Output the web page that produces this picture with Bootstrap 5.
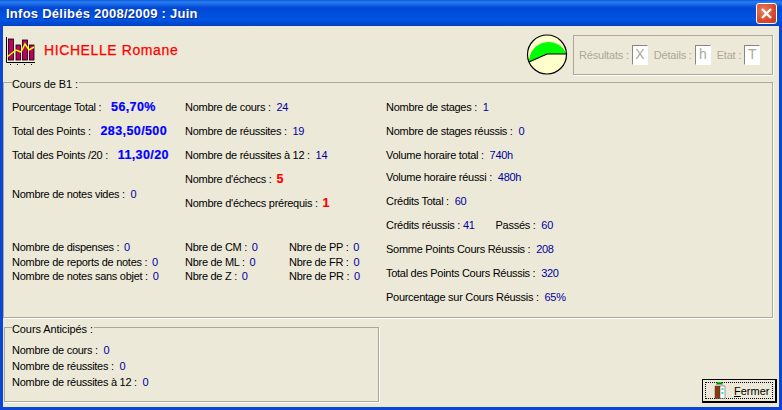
<!DOCTYPE html>
<html lang="fr"><head><meta charset="utf-8"><title>Infos Délibés</title>
<link href="https://cdn.jsdelivr.net/npm/bootstrap@5.3.0/dist/css/bootstrap.min.css" rel="stylesheet">
<style>
html,body{margin:0;height:410px;width:782px;overflow:hidden}
body{font:11px/14px "Liberation Sans",sans-serif;letter-spacing:-.28px;color:#000;background:#0a4ad8}
.xp-win{width:782px;height:410px;padding:0 3px 3px 3px;background:#0b47d6}
.xp-title{height:26px;margin:0 -3px;padding:0 5px 0 6px;background:linear-gradient(#0a5be0,#2a7cf0 8%,#0148d4 30%,#0054e3 75%,#0242c4);color:#fff;font:bold 13px "Liberation Sans",sans-serif;letter-spacing:.25px;text-shadow:1px 1px 0 #0a2a90}
.xp-close{width:21px;height:21px;border:1px solid #fff;border-radius:3px;background:radial-gradient(circle at 35% 35%,#e8805f,#d8492a 60%,#c03a1a);padding:0;line-height:0}
.xp-client{height:381px;background:#ece9d8}
.xp-head{height:47px;padding:8px 6px 0 2px}
.xp-name{color:#f00;font:14px/14px "Liberation Sans",sans-serif;-webkit-text-stroke:.25px #f00;margin:9px 0 0 7px;letter-spacing:.6px}
.xp-pie{margin-right:5px}
.xp-state{width:200px;height:40px;margin-top:1px;flex:none;border:1px solid #aca899;box-shadow:1px 1px 0 #fff;padding-left:5px;color:#aca899;gap:3px;white-space:nowrap;letter-spacing:-.2px}
.xp-box{width:16px;height:20px;background:#fff;border:1px solid;border-color:#8a877a #fff #fff #8a877a;line-height:17px;font-size:14px;text-align:center;margin-right:3px}
fieldset.xp-grp{border:1px solid #aca899;box-shadow:1px 1px 0 #fff;margin:0;min-width:0}
legend.xp-leg{float:none;width:auto;font:11px/14px "Liberation Sans",sans-serif;letter-spacing:-.1px;margin:0;padding:4px 1px 0 0;color:#000}
.xp-main{height:245px;padding:0 0 0 8px;margin-right:6px!important}
.xp-inner{padding-top:4px}
.xp-col1{width:173px}.xp-col2{width:201px}.xp-col4{width:104px}
.ln{height:24px;line-height:24px;white-space:nowrap}
.ln-n{height:22px}
.ln-t{height:14.5px;line-height:14.5px;white-space:nowrap}
.gap-a{margin-top:15px}.gap-b{margin-top:25px}
.v{color:#00009c;margin-left:3px}
.ln-t .v{margin-left:2px}
.v0{margin-left:0}
.vb{color:#0000ff;font:bold 12.5px "Liberation Sans",sans-serif;letter-spacing:.4px;margin-left:7px;-webkit-text-stroke:.2px #00f}
.vrd{color:#f00;font:bold 12.5px "Liberation Sans",sans-serif;margin-left:2px;-webkit-text-stroke:.2px #f00}
.xp-pass{margin-left:21px}
.xp-foot{padding-left:1px;padding-right:2px}
.xp-antic{width:375px;height:84px;padding:0 0 0 7px}
.xp-anticin{padding-top:6px}
.ln-a{height:16px;line-height:16px;white-space:nowrap}
.xp-btn{width:75px;height:24px;padding:2px;border:1px solid #000;border-right-width:2px;border-bottom-width:2px;background:#ece9d8;border-radius:0;margin-bottom:4px;font-size:11px;letter-spacing:0;color:#000}
.xp-btn-in{height:100%;border:1px dotted #000;gap:8px;padding-left:8px}
.xp-u{text-decoration:underline}
</style></head><body>
<div class="xp-win d-flex flex-column">
 <div class="xp-title d-flex align-items-center justify-content-between">
  <span>Infos Délibés 2008/2009 : Juin</span>
  <button class="xp-close d-flex align-items-center justify-content-center" aria-label="Fermer"><svg width="13" height="13" viewBox="0 0 13 13"><path d="M2 2l9 9M11 2l-9 9" stroke="#fff" stroke-width="2.4" fill="none"/></svg></button>
 </div>
 <div class="xp-client d-flex flex-column">
  <div class="xp-head d-flex">
   <svg width="32" height="32" viewBox="0 0 32 32"><path d="M1.500 3v25.500H30" fill="none" stroke="#000" stroke-width="1"/><g fill="#c00060" stroke="#000" stroke-width=".8"><rect x="3.500" y="5" width="5" height="21"/><rect x="11" y="11" width="4.500" height="15"/><rect x="17.500" y="6" width="5" height="20"/><rect x="24.500" y="11" width="4.500" height="15"/></g><path d="M2 23l9-7 5 2 4-8 4 6 5-3" stroke="#ff0" stroke-width="1.500" fill="none"/><path d="M5 30.500h1M12 30.500h1M19 30.500h1M26 30.500h1" stroke="#000"/></svg>
   <h1 class="xp-name flex-grow-1">HICHELLE Romane</h1>
   <svg class="xp-pie" width="42" height="42" viewBox="0 0 42 42"><circle cx="21" cy="20.500" r="19.500" fill="#ffc"/><path d="M3 28L21 20H40.500A19.500 19.500 0 0 0 3 28Z" fill="#0f0"/><circle cx="21" cy="20.500" r="19.500" fill="none" stroke="#000" stroke-width="1.200"/><path d="M3 28L21 20H40.500" fill="none" stroke="#000" stroke-width="1.200"/></svg>
   <div class="xp-state d-flex align-items-center"><span>Résultats :</span><span class="xp-box">X</span><span>Détails :</span><span class="xp-box">h</span><span>Etat :</span><span class="xp-box">T</span></div>
  </div>
  <fieldset class="xp-grp xp-main">
   <legend class="xp-leg">Cours de B1 :</legend>
   <div class="xp-inner d-flex">
   <div class="d-flex flex-column">
    <div class="d-flex">
     <div class="xp-col1">
      <div class="ln">Pourcentage Total : <span class="vb">56,70%</span></div>
      <div class="ln">Total des Points : <span class="vb">283,50/500</span></div>
      <div class="ln">Total des Points /20 : <span class="vb">11,30/20</span></div>
      <div class="ln gap-a">Nombre de notes vides : <span class="v">0</span></div>
     </div>
     <div class="xp-col2">
      <div class="ln">Nombre de cours : <span class="v">24</span></div>
      <div class="ln">Nombre de réussites : <span class="v">19</span></div>
      <div class="ln">Nombre de réussites à 12 : <span class="v">14</span></div>
      <div class="ln">Nombre d'échecs : <span class="vrd">5</span></div>
      <div class="ln">Nombre d'échecs prérequis : <span class="vrd">1</span></div>
     </div>
    </div>
    <div class="d-flex gap-b">
     <div class="xp-col1">
      <div class="ln-t">Nombre de dispenses : <span class="v">0</span></div>
      <div class="ln-t">Nombre de reports de notes : <span class="v">0</span></div>
      <div class="ln-t">Nombre de notes sans objet : <span class="v">0</span></div>
     </div>
     <div class="xp-col4">
      <div class="ln-t">Nbre de CM : <span class="v">0</span></div>
      <div class="ln-t">Nbre de ML : <span class="v">0</span></div>
      <div class="ln-t">Nbre de Z : <span class="v">0</span></div>
     </div>
     <div>
      <div class="ln-t">Nbre de PP : <span class="v">0</span></div>
      <div class="ln-t">Nbre de FR : <span class="v">0</span></div>
      <div class="ln-t">Nbre de PR : <span class="v">0</span></div>
     </div>
    </div>
   </div>
   <div>
    <div class="ln">Nombre de stages : <span class="v">1</span></div>
    <div class="ln">Nombre de stages réussis : <span class="v">0</span></div>
    <div class="ln ln-n">Volume horaire total : <span class="v">740h</span></div>
    <div class="ln">Volume horaire réussi : <span class="v">480h</span></div>
    <div class="ln">Crédits Total : <span class="v">60</span></div>
    <div class="ln">Crédits réussis : <span class="v v0">41</span><span class="xp-pass">Passés : <span class="v">60</span></span></div>
    <div class="ln">Somme Points Cours Réussis : <span class="v">208</span></div>
    <div class="ln">Total des Points Cours Réussis : <span class="v">320</span></div>
    <div class="ln">Pourcentage sur Cours Réussis : <span class="v">65%</span></div>
   </div>
   </div>
  </fieldset>
  <div class="xp-foot d-flex justify-content-between align-items-start flex-grow-1">
   <fieldset class="xp-grp xp-antic">
    <legend class="xp-leg">Cours Anticipés :</legend>
    <div class="xp-anticin">
    <div class="ln-a">Nombre de cours : <span class="v">0</span></div>
    <div class="ln-a">Nombre de réussites : <span class="v">0</span></div>
    <div class="ln-a">Nombre de réussites à 12 : <span class="v">0</span></div>
    </div>
   </fieldset>
   <button class="xp-btn align-self-end"><span class="xp-btn-in d-flex align-items-center"><svg width="12" height="17" viewBox="0 0 12 17"><rect x="3" y="0" width="5" height="2" fill="#0c0"/><path d="M2 2h7" stroke="#000" stroke-width=".6"/><rect x="1" y="4" width="5" height="12.500" fill="#8a3a08" stroke="#444" stroke-width=".5"/><rect x="6" y="4" width="5" height="12.500" fill="#fff" stroke="#444" stroke-width=".5"/><path d="M7.500 6h2v2h-2zM7.500 10h2v2h-2z" fill="#3dd"/></svg><span><span class="xp-u">F</span>ermer</span></span></button>
  </div>
 </div>
</div>
<script src="https://cdn.jsdelivr.net/npm/bootstrap@5.3.0/dist/js/bootstrap.bundle.min.js"></script>
</body></html>
